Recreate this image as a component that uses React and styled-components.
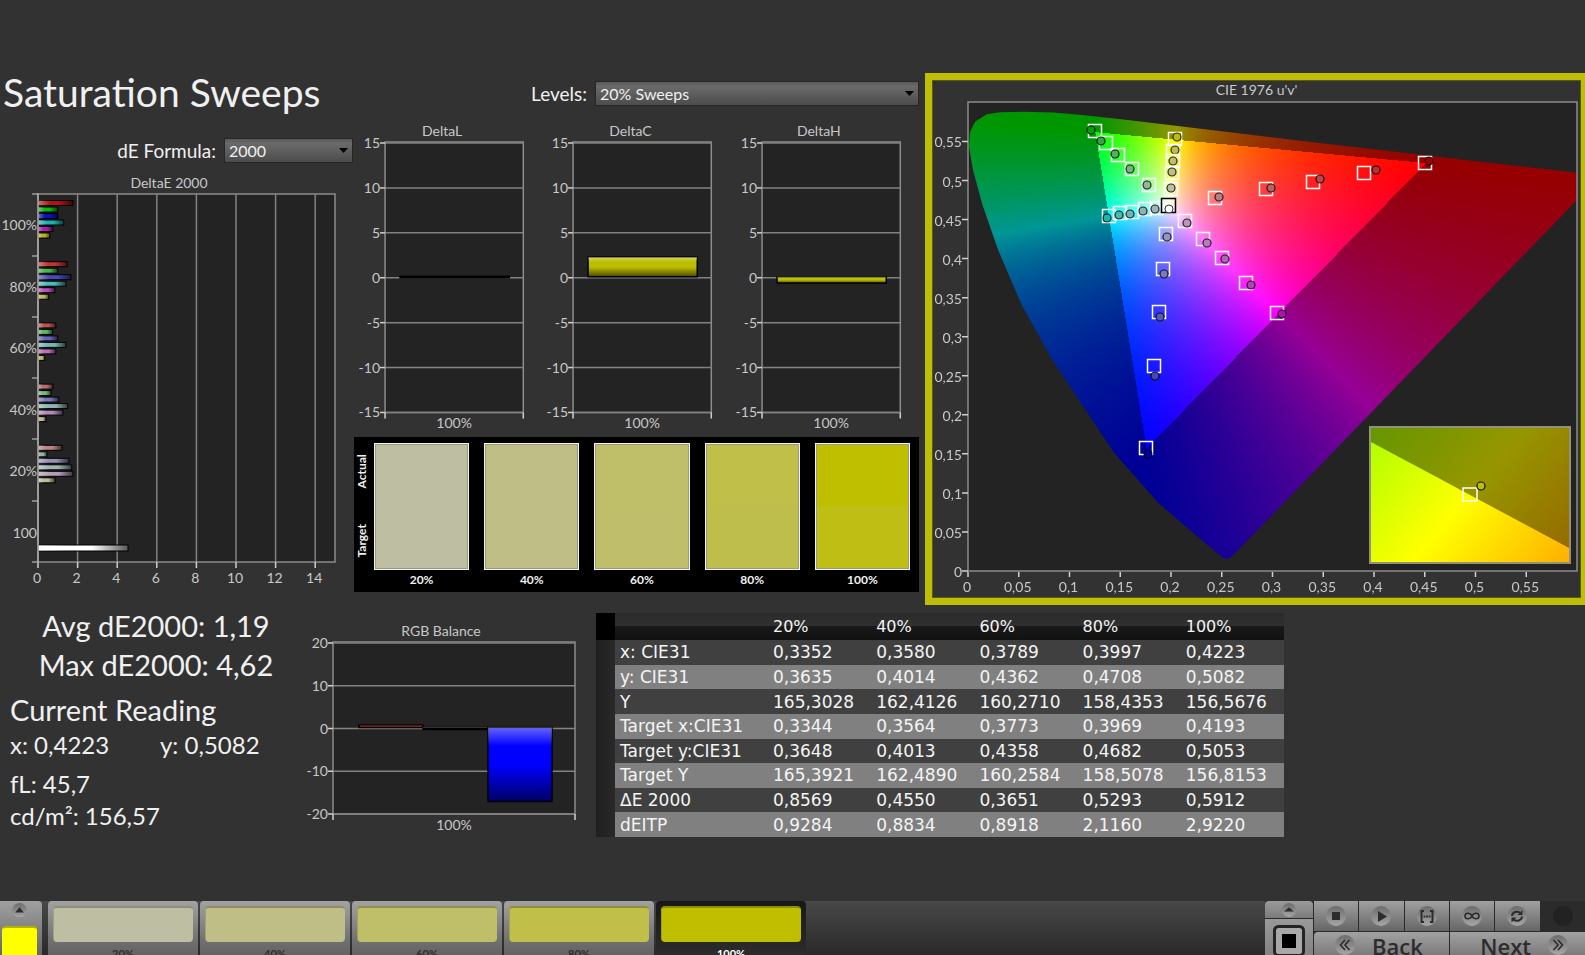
import React, { useLayoutEffect, useRef } from 'react';
import styled, { createGlobalStyle } from 'styled-components';

const GlobalStyle = createGlobalStyle`
  * {
    box-sizing: border-box;
  }

  body {
    margin: 0;
    background: #323232;
    color: #f0f0f0;
    font-family: Lato, 'Liberation Sans', sans-serif;
  }

  h1, h2, p {
    margin: 0;
    font-weight: 400;
  }
`;

const Page = styled.div`
  display: flex;
  flex-direction: column;
  min-height: 100vh;
  overflow: hidden;
`;

const Main = styled.main`
  flex: 1;
  padding-top: 73px;
`;

const TopArea = styled.div`
  display: grid;
  grid-template-columns: 354fr 571fr 660fr;
`;

const BottomArea = styled.div`
  display: grid;
  grid-template-columns: 298fr 298fr 688fr 301fr;
  align-items: start;
`;

const Title = styled.h1`
  padding-left: 3px;
  font-size: 39px;
  line-height: 39px;
  white-space: nowrap;
`;

const Field = styled.label`
  display: flex;
  align-items: center;
  justify-content: flex-end;
  gap: 8px;
  margin-top: ${(p) => p.$top}px;
  padding-right: ${(p) => p.$right || 0}px;
  font-size: 19px;
  line-height: 25px;
`;

const SelectBox = styled.span`
  position: relative;
  display: flex;
  width: ${(p) => p.$width};
`;

const Select = styled.select`
  appearance: none;
  width: 100%;
  height: 25px;
  padding: 0 24px 0 4px;
  border: 1px solid #262626;
  border-radius: 0;
  background: linear-gradient(#5a5a5a, #6a6a6a 20%, #4c4c4c);
  color: #f0f0f0;
  font: 16px Lato, sans-serif;
`;

const SelectArrow = styled.svg`
  position: absolute;
  right: 5px;
  top: 10px;
  width: 9px;
  height: 5px;
  pointer-events: none;
`;

const ChartTitle = styled.h2`
  padding-right: ${(p) => p.$right || 0}px;
  color: #c8c8c8;
  font-size: 14px;
  line-height: 20px;
  text-align: center;
`;

const ChartSvg = styled.svg`
  display: block;
  width: 100%;
  height: auto;
  overflow: visible;

  text {
    fill: #c8c8c8;
    font-size: 14px;
  }
`;

const DeltaE = styled.section`
  padding-top: 10px;
`;

const Middle = styled.div`
  padding-right: 6px;
`;

const DeltaRow = styled.div`
  display: grid;
  grid-template-columns: repeat(3, 1fr);
  margin-top: 15px;
`;

const SwatchPanel = styled.section`
  display: flex;
  height: 155px;
  padding: 6px 9px 0 0;
  background: #000;
  font-size: 12px;
  font-weight: 700;
`;

const SideLabels = styled.div`
  display: flex;
  flex-direction: column;
  width: 20px;
  height: 141px;
  margin-top: -7px;
`;

const SideLabel = styled.span`
  flex: 1;
  writing-mode: vertical-rl;
  transform: rotate(180deg);
  line-height: 16px;
  text-align: center;
`;

const Swatches = styled.div`
  flex: 1;
  display: grid;
  grid-template-columns: repeat(5, 1fr);
  gap: 15px;
  text-align: center;
  line-height: 20px;
`;

const SwatchColor = styled.div`
  height: 127px;
  border: 1px solid #f4f4e8;
  box-shadow: inset 0 0 0 1px #9a9a78;
  background: linear-gradient(${(p) => p.$actual} 50%, ${(p) => p.$target} 50%);
`;

const CiePanel = styled.section`
  align-self: start;
  border: 7px solid #bebe08;
  border-right-width: 4px;
  box-shadow: inset 0 0 0 1px #5c5c10;
`;

const GamutCanvas = styled.canvas`
  display: block;
  width: 100%;
  height: 100%;
`;

const Stats = styled.section`
  padding: 1px 0 0 10px;
  font-size: 24px;
  line-height: 32px;
  white-space: nowrap;
`;

const Summary = styled.div`
  padding-left: 4px;
  font-size: 29px;
  line-height: 39px;
  text-align: center;
`;

const ReadingTitle = styled.h2`
  margin-top: 6px;
  font-size: 29px;
  line-height: 39px;
`;

const ReadingRow = styled.div`
  display: grid;
  grid-template-columns: 150px 1fr;
  margin-bottom: 7px;
`;

const Balance = styled.section`
  padding-top: 16px;
`;

const Table = styled.table`
  width: 100%;
  height: 224px;
  margin-top: 8px;
  border-collapse: collapse;
  table-layout: fixed;
  font-family: 'DejaVu Sans', sans-serif;
  font-size: 17px;
  line-height: 20px;
  color: #f4f4f4;

  th, td {
    padding: 0 0 0 5px;
    font-weight: 400;
    text-align: left;
    white-space: nowrap;
  }

  thead tr {
    height: 27px;
    background: linear-gradient(#2b2b2b, #303030 48%, #191919 50%, #121212);
  }

  thead th {
    font-size: 16px;
  }

  tbody tr {
    background: #404040;
  }

  tbody tr:nth-child(even) {
    background: #808080;
  }

  tbody td:first-child {
    background: linear-gradient(90deg, #1f1f1f, #292929);
  }

  thead td:first-child {
    background: #000;
  }
`;

const Footer = styled.footer`
  display: flex;
  height: 54px;
  overflow: hidden;
  background: linear-gradient(#484848, #2a2a2a);
`;

const PatternButton = styled.button`
  display: flex;
  flex-direction: column;
  align-items: center;
  gap: 9px;
  width: 42px;
  height: 64px;
  margin-right: 6px;
  padding: 2px 5px 0 2px;
  border: 0;
  border-radius: 0 4px 0 0;
  background: linear-gradient(#a0a0a0, #5c5c5c);
`;

const CurrentPatch = styled.span`
  width: 35px;
  height: 40px;
  border-top: 2px solid #b4b400;
  border-radius: 4px;
  background: #ffff00;
`;

const Steps = styled.div`
  display: flex;
  gap: 2px;
  flex: 0 1 758px;
`;

const StepButton = styled.button`
  flex: 1;
  height: 64px;
  padding: 5px 5px 4px;
  border: 0;
  border-radius: 4px 4px 0 0;
  background: ${(p) => (p.$active
    ? 'linear-gradient(#181818, #303030)'
    : 'linear-gradient(#a2a2a2, #707070 40px, #585858)')};
  color: ${(p) => (p.$active ? '#fff' : '#2e2e2e')};
  font: 700 11px/14px Lato, sans-serif;
`;

const StepColor = styled.span`
  display: block;
  height: 36px;
  margin-bottom: 5px;
  border-top: 2px solid rgba(0, 0, 0, 0.25);
  border-left: 1px solid rgba(0, 0, 0, 0.15);
  border-radius: 4px;
  background: ${(p) => p.$color};
`;

const Controls = styled.div`
  display: flex;
  gap: 1px;
  width: 320px;
  height: 64px;
  margin-left: auto;
  background: #2a2a2a;
`;

const WindowColumn = styled.div`
  display: flex;
  flex-direction: column;
  gap: 1px;
  width: 48px;
`;

const WindowButton = styled.button`
  display: flex;
  justify-content: center;
  align-items: flex-start;
  height: ${(p) => p.$height}px;
  padding: ${(p) => p.$pad}px 0 0;
  border: 0;
  border-radius: ${(p) => (p.$round ? '4px 4px 0 0' : '0')};
  background: linear-gradient(#9a9a9a, #7c7c7c);
`;

const Transport = styled.div`
  flex: 1;
  display: grid;
  grid-template-columns: repeat(6, 1fr);
  grid-template-rows: 30px 33px;
  gap: 1px;
`;

const TransportButton = styled.button`
  display: flex;
  align-items: center;
  justify-content: center;
  padding: 0;
  border: 0;
  background: ${(p) => (p.disabled ? '#2b2b2b' : 'linear-gradient(#a0a0a0, #666)')};
`;

const NavButton = styled.button`
  grid-column: span 3;
  display: flex;
  align-items: flex-start;
  justify-content: ${(p) => (p.$end ? 'flex-end' : 'flex-start')};
  gap: 17px;
  padding: 3px 17px 0 21px;
  border: 0;
  border-radius: ${(p) => (p.$end ? '0' : '4px 0 0 0')};
  background: linear-gradient(#a2a2a2, #6a6a6a);
  color: #2c2c2c;
  font: 600 22px/22px 'Open Sans', sans-serif;
`;

const levels = ['20%', '40%', '60%', '80%', '100%'];

const swatches = [
  { actual: '#bebea3', target: '#bebea2' },
  { actual: '#bfbe87', target: '#bfbe86' },
  { actual: '#bfbf6a', target: '#bebe6b' },
  { actual: '#bfbf49', target: '#bebe4d' },
  { actual: '#bfbf00', target: '#bebe14' },
];

const sweepBars = [
  { label: '100%', values: [1.76, 1, 1, 1.3, 0.75, 0.6], colors: ['#b01216', '#10b410', '#1010b8', '#1cb0b0', '#b01cb0', '#b8b428'] },
  { label: '80%', values: [1.47, 1, 1.66, 1.41, 0.85, 0.54], colors: ['#c03434', '#4cb44c', '#4848b4', '#50b8b8', '#b850b8', '#bcb85c'] },
  { label: '60%', values: [0.9, 0.74, 1, 1.41, 0.9, 0.34], colors: ['#b85454', '#5cb860', '#6464bc', '#74b4b4', '#b870b4', '#bcb870'] },
  { label: '40%', values: [0.75, 0.66, 1.05, 1.5, 1.26, 0.4], colors: ['#b86c6c', '#78b878', '#7878b8', '#8cb4b4', '#b488b8', '#bcb888'] },
  { label: '20%', values: [1.21, 0.45, 1.56, 1.7, 1.76, 0.86], colors: ['#b88488', '#90b498', '#9490b0', '#a0b4b4', '#b49cb4', '#bcbca0'] },
];

const rows = [
  ['x: CIE31', '0,3352', '0,3580', '0,3789', '0,3997', '0,4223'],
  ['y: CIE31', '0,3635', '0,4014', '0,4362', '0,4708', '0,5082'],
  ['Y', '165,3028', '162,4126', '160,2710', '158,4353', '156,5676'],
  ['Target x:CIE31', '0,3344', '0,3564', '0,3773', '0,3969', '0,4193'],
  ['Target y:CIE31', '0,3648', '0,4013', '0,4358', '0,4682', '0,5053'],
  ['Target Y', '165,3921', '162,4890', '160,2584', '158,5078', '156,8153'],
  ['ΔE 2000', '0,8569', '0,4550', '0,3651', '0,5293', '0,5912'],
  ['dEITP', '0,9284', '0,8834', '0,8918', '2,1160', '2,9220'],
];

// [target x, target y, reading x, reading y, reading colour]
const points = [
  [162, 30, 158, 29, '#00a000'],
  [173, 42, 168, 40, '#3ca046'],
  [185, 54, 182, 53, '#5aaa64'],
  [199, 68, 197, 68, '#78b480'],
  [216, 84, 214, 84, '#96b49b'],
  [242, 38, 244, 36, '#bebe00'],
  [240, 50, 242, 49, '#bebe4b'],
  [240, 60, 240, 60, '#bebe6b'],
  [239, 72, 239, 71, '#bebe87'],
  [238, 88, 238, 87, '#bebea3'],
  [176, 115, 174, 117, '#1eb4aa'],
  [187, 112, 186, 114, '#50b4b0'],
  [199, 111, 197, 113, '#70b4b2'],
  [212, 108, 210, 110, '#8cb4b4'],
  [224, 107, 222, 108, '#a0b4b8'],
  [282, 97, 286, 96, '#b48084'],
  [333, 88, 338, 87, '#b46464'],
  [380, 81, 387, 78, '#b44c4c'],
  [431, 72, 443, 69, '#b43232'],
  [492, 62, 496, 60, '#a00000'],
  [252, 120, 254, 122, '#b496be'],
  [270, 138, 274, 142, '#b47dbe'],
  [289, 157, 292, 158, '#b464b4'],
  [313, 182, 318, 184, '#aa46aa'],
  [344, 212, 349, 213, '#aa14aa'],
  [233, 133, 234, 136, '#9696b9'],
  [230, 168, 231, 173, '#7d78b9'],
  [226, 211, 227, 216, '#5a5ab4'],
  [221, 265, 222, 275, '#4646b4'],
  [213, 347, 215, 353, '#0000a0'],
];

// Spectral locus in u'v', from the violet end to the red end
const locus = [
  [0.2614, 0.0205], [0.258, 0.0165], [0.2542, 0.0154], [0.251, 0.017], [0.248, 0.0205],
  [0.2347, 0.035], [0.2161, 0.0549], [0.1877, 0.0871], [0.1441, 0.151], [0.0828, 0.2708],
  [0.0521, 0.3427], [0.0295, 0.4117], [0.014, 0.4698], [0.005, 0.5131], [0.001, 0.5432],
  [0.002, 0.562], [0.007, 0.5753], [0.0184, 0.5847], [0.0315, 0.5873], [0.055, 0.588],
  [0.084, 0.587], [0.1127, 0.584], [0.1531, 0.578], [0.2026, 0.5705], [0.2623, 0.561],
  [0.3315, 0.5501], [0.4035, 0.5393], [0.4692, 0.5296], [0.5203, 0.5219], [0.6234, 0.5065],
];

const PLOT_W = 609;
const PLOT_H = 469;
const U_SCALE = 1015;
const V_SCALE = 781;

const drawGamut = (canvas) => {
  const ctx = canvas.getContext('2d');
  const image = ctx.createImageData(PLOT_W, PLOT_H);

  for (let py = 0; py < PLOT_H; py++) {
    const v = (PLOT_H - py) / V_SCALE;
    for (let px = 0; px < PLOT_W; px++) {
      const u = px / U_SCALE;
      // u'v' to XYZ with Y = 1, then to linear RGB
      const X = (9 * u) / (4 * v);
      const Z = (12 - 3 * u - 20 * v) / (4 * v);
      const rgb = [
        3.2406 * X - 1.5372 - 0.4986 * Z,
        -0.9689 * X + 1.8758 + 0.0415 * Z,
        0.0557 * X - 0.204 + 1.057 * Z,
      ];
      const max = Math.max(...rgb);
      // Colours that the display cannot reach are dimmed
      const dim = Math.min(...rgb) < -0.0001 ? 0.59 : 1;
      const i = (py * PLOT_W + px) * 4;
      rgb.forEach((c, n) => {
        image.data[i + n] = (255 * dim * Math.max(c, 0)) / max;
      });
      image.data[i + 3] = 255;
    }
  }
  ctx.putImageData(image, 0, 0);

  // Keep only what lies inside the locus
  ctx.globalCompositeOperation = 'destination-in';
  ctx.beginPath();
  locus.forEach(([u, v]) => ctx.lineTo(u * U_SCALE, PLOT_H - v * V_SCALE));
  ctx.closePath();
  ctx.fill();
};

const Dropdown = ({ id, value, width }) => (
  <SelectBox $width={width}>
    <Select id={id} defaultValue={value}>
      <option>{value}</option>
    </Select>
    <SelectArrow viewBox="0 0 9 5"><path d="M0 0h9L4.5 5z" /></SelectArrow>
  </SelectBox>
);

const DeltaEChart = () => {
  const x = (value) => 38 + value * 19.8;

  return (
    <ChartSvg viewBox="0 0 354 399">
      <defs>
        <linearGradient id="shadeX">
          <stop offset="0" stopColor="#fff" stopOpacity="0.4" />
          <stop offset="0.35" stopColor="#fff" stopOpacity="0" />
          <stop offset="0.6" stopColor="#000" stopOpacity="0" />
          <stop offset="1" stopColor="#000" stopOpacity="0.65" />
        </linearGradient>
      </defs>
      <rect x="38" y="1" width="297" height="368" fill="#232323" stroke="#8c8c8c" strokeWidth="1.5" />
      {[0, 2, 4, 6, 8, 10, 12, 14].map((n) => (
        <g key={n}>
          <path d={`M${x(n)} 1V369`} stroke="#828282" strokeWidth="1.5" />
          <path d={`M${x(n)} 369v6`} stroke="#d0d0d0" strokeWidth="1.5" />
          <text x={x(n) - 1} y="390" textAnchor="middle">{n}</text>
        </g>
      ))}
      {[1, 63, 124, 185, 246, 308, 369].map((y) => (
        <path key={y} d={`M32 ${y}h6`} stroke="#d0d0d0" />
      ))}
      {sweepBars.map((group, g) => (
        <g key={group.label}>
          <text x="37" y={37 + g * 61.5} textAnchor="end">{group.label}</text>
          {group.values.map((value, i) => {
            const box = { x: 38, y: 7.5 + g * 61.2 + i * 6.5, width: x(value) - 38, height: 5 };
            return (
              <g key={i}>
                <rect {...box} fill={group.colors[i]} stroke="#000" />
                <rect {...box} fill="url(#shadeX)" />
              </g>
            );
          })}
        </g>
      ))}
      <text x="37" y="345" textAnchor="end">100</text>
      <rect x="38" y="352" width="90" height="6" fill="#fff" stroke="#000" />
      <rect x="38" y="352" width="90" height="6" fill="url(#shadeX)" />
      <path d="M38 0V370" stroke="#a8a8a8" strokeWidth="1.5" />
    </ChartSvg>
  );
};

const LevelChart = ({ title, width, height, left, right, bottom, ticks, bars }) => {
  const max = ticks[0];
  const y = (value) => 2 + ((max - value) / (2 * max)) * (bottom - 2);

  return (
    <div>
      <ChartTitle $right={12}>{title}</ChartTitle>
      <ChartSvg viewBox={`0 0 ${width} ${height}`}>
        <defs>
          <linearGradient id="shadeY" x2="0" y2="1">
            <stop offset="0" stopColor="#fff" stopOpacity="0.4" />
            <stop offset="0.25" stopColor="#fff" stopOpacity="0" />
            <stop offset="0.5" stopColor="#000" stopOpacity="0" />
            <stop offset="1" stopColor="#000" stopOpacity="0.6" />
          </linearGradient>
        </defs>
        <rect x={left} y="1" width={right - left} height={bottom - 1} fill="#232323" stroke="#8c8c8c" strokeWidth="1.5" />
        {ticks.map((n) => (
          <g key={n}>
            <path d={`M${left} ${y(n)}H${right}`} stroke="#828282" strokeWidth="1.5" />
            <path d={`M${left - 5} ${y(n)}h5`} stroke="#d0d0d0" strokeWidth="1.5" />
            <text x={left - 5} y={y(n) + 5} textAnchor="end">{n}</text>
          </g>
        ))}
        <path d={`M${left} ${bottom}v6M${right} ${bottom}v6`} stroke="#d0d0d0" strokeWidth="1.5" />
        {bars.map((bar, i) => {
          const box = {
            x: bar.x,
            y: y(Math.max(bar.value, 0)) - 1,
            width: bar.width,
            height: Math.max(Math.abs(y(bar.value) - y(0)), 2),
          };
          return (
            <g key={i}>
              <rect {...box} fill={bar.color} stroke="#000" strokeWidth="1.5" />
              <rect {...box} fill="url(#shadeY)" />
            </g>
          );
        })}
        <text x={(left + right) / 2} y={bottom + 16} textAnchor="middle">100%</text>
      </ChartSvg>
    </div>
  );
};

const DeltaChart = ({ title, value, color }) => (
  <LevelChart
    title={title}
    width={188}
    height={295}
    left={31}
    right={169}
    bottom={271}
    ticks={[15, 10, 5, 0, -5, -10, -15]}
    bars={[{ x: 46, width: 109, value, color }]}
  />
);

const CieChart = () => {
  const canvasRef = useRef(null);

  useLayoutEffect(() => {
    drawGamut(canvasRef.current);
  }, []);

  const axis = Array.from({ length: 12 }, (_, i) => i * 0.05);
  const label = (n) => String(Number(n.toFixed(2))).replace('.', ',');

  return (
    <ChartSvg viewBox="0 0 649 498">
      <rect x="36" y="2" width={PLOT_W} height={PLOT_H} fill="#232323" />
      <foreignObject x="36" y="2" width={PLOT_W} height={PLOT_H}>
        <GamutCanvas ref={canvasRef} width={PLOT_W} height={PLOT_H} />
      </foreignObject>
      <rect x="36" y="2" width={PLOT_W} height={PLOT_H} fill="none" stroke="#8c8c8c" strokeWidth="1.5" />
      {axis.map((n) => {
        const x = 36 + n * U_SCALE;
        const y = 471 - n * V_SCALE;
        return (
          <g key={n}>
            <path d={`M${x} 472v5M30 ${y}h6`} stroke="#d0d0d0" strokeWidth="1.5" />
            <text x={x - 1} y="492" textAnchor="middle">{label(n)}</text>
            <text x="30" y={y + 6} textAnchor="end">{label(n)}</text>
          </g>
        );
      })}
      <g transform="translate(1 1)">
        {points.map(([tx, ty, rx, ry, color]) => (
          <g key={`${tx}-${ty}`}>
            <rect x={tx - 6.5} y={ty - 6.5} width="13" height="13" fill="none" stroke="#fff" strokeWidth="1.5" />
            <circle cx={rx} cy={ry} r="4" fill={color} stroke="#000" strokeOpacity="0.8" strokeWidth="1.2" />
          </g>
        ))}
        <rect x="228.5" y="97.5" width="14" height="14" fill="none" stroke="#000" strokeWidth="1.5" />
        <circle cx="236" cy="108" r="4" fill="#fff" stroke="#333" />
      </g>

      {/* Close-up of the selected point */}
      <svg x="437" y="326" width="202" height="138">
        <defs>
          <linearGradient id="bright" gradientUnits="userSpaceOnUse" x1="7" y1="6" x2="184" y2="155">
            <stop offset="0" stopColor="#b0ff00" />
            <stop offset="0.48" stopColor="#ffff00" />
            <stop offset="1" stopColor="#ffb000" />
          </linearGradient>
          <linearGradient id="dim" gradientUnits="userSpaceOnUse" x1="7" y1="6" x2="184" y2="155">
            <stop offset="0" stopColor="#689600" />
            <stop offset="0.48" stopColor="#969600" />
            <stop offset="1" stopColor="#966800" />
          </linearGradient>
        </defs>
        <rect width="202" height="138" fill="url(#dim)" />
        <path d="M0 15L202 123V138H0z" fill="url(#bright)" />
        <rect x="1" y="1" width="200" height="136" fill="none" stroke="#929278" strokeWidth="2" />
        <rect x="94" y="62" width="14" height="13" fill="none" stroke="#fff" strokeWidth="1.5" />
        <circle cx="112" cy="60" r="4" fill="#bebe00" stroke="#111" strokeWidth="1.2" />
      </svg>
    </ChartSvg>
  );
};

const RoundIcon = ({ size = 20, dark, children }) => (
  <svg width={size} height={size} viewBox="0 0 20 20" fill="none" stroke="#2c2c2c" strokeWidth="1.6">
    <defs>
      <linearGradient id="knob" x2="0" y2="1">
        <stop offset="0" stopColor="#6c6c6c" />
        <stop offset="1" stopColor="#a6a6a6" />
      </linearGradient>
    </defs>
    <circle cx="10" cy="10" r="10" fill={dark ? '#222' : 'url(#knob)'} stroke="none" />
    {children}
  </svg>
);

const App = () => (
  <Page>
    <GlobalStyle />
    <Main>
      <TopArea>
        <div>
          <Title>Saturation Sweeps</Title>
          <Field htmlFor="formula" $top={26} $right={1}>
            dE Formula:
            <Dropdown id="formula" value="2000" width="129px" />
          </Field>
          <DeltaE>
            <ChartTitle $right={16}>DeltaE 2000</ChartTitle>
            <DeltaEChart />
          </DeltaE>
        </div>

        <Middle>
          <Field htmlFor="levels" $top={8}>
            Levels:
            <Dropdown id="levels" value="20% Sweeps" width="324px" />
          </Field>
          <DeltaRow>
            <DeltaChart title="DeltaL" value={0.1} color="#000" />
            <DeltaChart title="DeltaC" value={2.2} color="#bebe00" />
            <DeltaChart title="DeltaH" value={-0.7} color="#bebe00" />
          </DeltaRow>
          <SwatchPanel>
            <SideLabels>
              <SideLabel>Actual</SideLabel>
              <SideLabel>Target</SideLabel>
            </SideLabels>
            <Swatches>
              {swatches.map((swatch, i) => (
                <div key={levels[i]}>
                  <SwatchColor $actual={swatch.actual} $target={swatch.target} />
                  {levels[i]}
                </div>
              ))}
            </Swatches>
          </SwatchPanel>
        </Middle>

        <CiePanel>
          <ChartTitle>CIE 1976 u'v'</ChartTitle>
          <CieChart />
        </CiePanel>
      </TopArea>

      <BottomArea>
        <Stats>
          <Summary>
            <p>Avg dE2000: 1,19</p>
            <p>Max dE2000: 4,62</p>
          </Summary>
          <ReadingTitle>Current Reading</ReadingTitle>
          <ReadingRow>
            <span>x: 0,4223</span>
            <span>y: 0,5082</span>
          </ReadingRow>
          <p>fL: 45,7</p>
          <p>cd/m²: 156,57</p>
        </Stats>

        <Balance>
          <LevelChart
            title="RGB Balance"
            width={298}
            height={196}
            left={35}
            right={277}
            bottom={173}
            ticks={[20, 10, 0, -10, -20]}
            bars={[
              { x: 61, width: 64, value: 0.6, color: '#b43232' },
              { x: 125, width: 65, value: -0.3, color: '#000' },
              { x: 190, width: 64, value: -17.3, color: '#0000ff' },
            ]}
          />
        </Balance>

        <Table>
          <colgroup>
            <col style={{ width: 19 }} />
            <col style={{ width: 153 }} />
            {levels.map((level) => <col key={level} />)}
          </colgroup>
          <thead>
            <tr>
              <td />
              <td />
              {levels.map((level) => <th key={level} scope="col">{level}</th>)}
            </tr>
          </thead>
          <tbody>
            {rows.map(([name, ...values]) => (
              <tr key={name}>
                <td />
                <th scope="row">{name}</th>
                {values.map((value, i) => <td key={i}>{value}</td>)}
              </tr>
            ))}
          </tbody>
        </Table>
      </BottomArea>
    </Main>

    <Footer>
      <PatternButton aria-label="Pattern">
        <RoundIcon size={15}><path d="M4 13L10 6l6 7z" fill="#2c2c2c" stroke="none" /></RoundIcon>
        <CurrentPatch />
      </PatternButton>
      <Steps>
        {levels.map((level, i) => (
          <StepButton key={level} $active={level === '100%'}>
            <StepColor $color={swatches[i].actual} />
            {level}
          </StepButton>
        ))}
      </Steps>
      <Controls>
        <WindowColumn>
          <WindowButton $height={17} $pad={2} $round aria-label="Expand">
            <RoundIcon size={14}><path d="M3 12l7-6 7 6z" fill="#2c2c2c" stroke="none" /></RoundIcon>
          </WindowButton>
          <WindowButton $height={46} $pad={6} aria-label="Pattern window">
            <svg width="32" height="32" viewBox="0 0 32 32">
              <rect x="1.5" y="1.5" width="29" height="29" rx="4" fill="#a8a8a8" stroke="#242424" strokeWidth="3" />
              <rect x="9" y="9" width="14" height="14" fill="#000" />
            </svg>
          </WindowButton>
        </WindowColumn>
        <Transport>
          <TransportButton aria-label="Stop">
            <RoundIcon><rect x="6" y="6" width="8" height="8" fill="#2c2c2c" stroke="none" /></RoundIcon>
          </TransportButton>
          <TransportButton aria-label="Play">
            <RoundIcon><path d="M7 5l9 5.5L7 16z" fill="#2c2c2c" stroke="none" /></RoundIcon>
          </TransportButton>
          <TransportButton aria-label="Read series">
            <RoundIcon>
              <path d="M7 5H4.5v11H7M13 5h2.5v11H13" strokeWidth="2" />
              <path d="M6.500 10.500h7" strokeWidth="2" strokeDasharray="1.800 0.800" />
            </RoundIcon>
          </TransportButton>
          <TransportButton aria-label="Read continuously">
            <RoundIcon>
              <path d="M10 10c-2-4-7-3.500-7 0s5 4 7 0 7-3.500 7 0-5 4-7 0z" />
            </RoundIcon>
          </TransportButton>
          <TransportButton aria-label="Refresh">
            <RoundIcon>
              <path d="M5 10a5 4.500 0 0 1 8.500-3M15 10.500a5 4.500 0 0 1-8.500 3" strokeWidth="2" />
              <path d="M15.500 4v5h-5zM4.500 16.500v-5h5z" fill="#2c2c2c" stroke="none" />
            </RoundIcon>
          </TransportButton>
          <TransportButton disabled aria-label="Record"><RoundIcon dark /></TransportButton>
          <NavButton>
            <RoundIcon><path d="M10 5l-4.500 5 4.500 5M14.500 5L10 10l4.500 5" /></RoundIcon>
            Back
          </NavButton>
          <NavButton $end>
            Next
            <RoundIcon><path d="M5.500 5l4.500 5-4.500 5M10 5l4.500 5-4.500 5" /></RoundIcon>
          </NavButton>
        </Transport>
      </Controls>
    </Footer>
  </Page>
);

export default App;
